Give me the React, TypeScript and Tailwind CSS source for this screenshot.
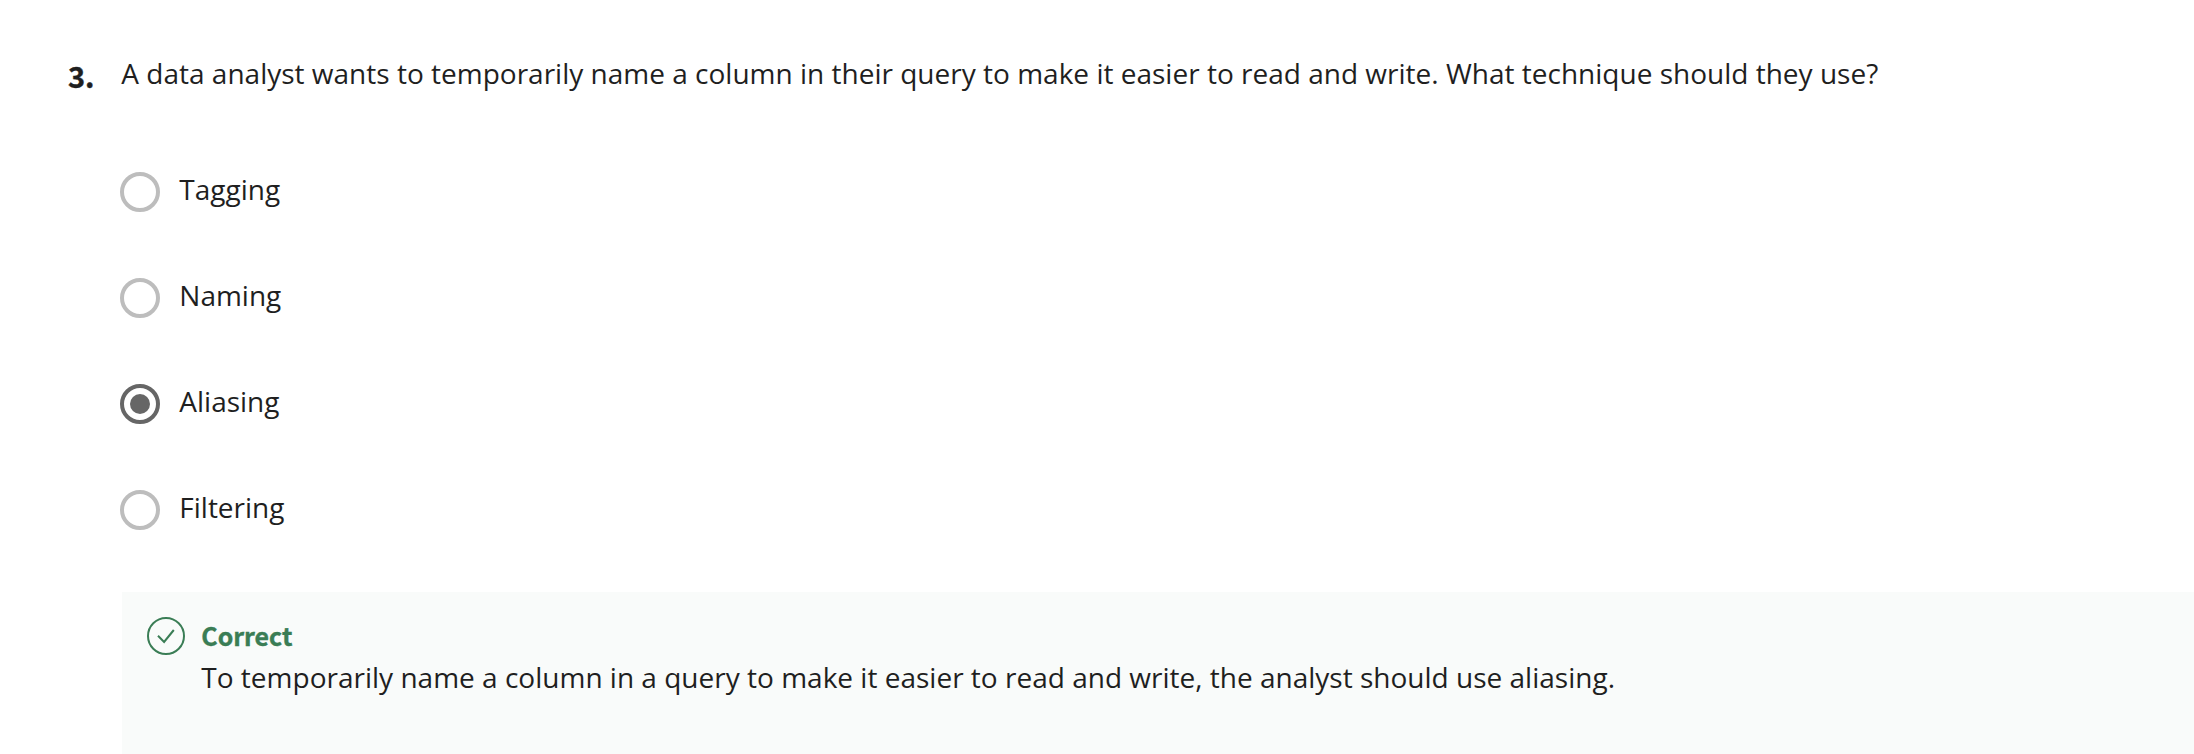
const options = ["Tagging", "Naming", "Aliasing", "Filtering"];
const selected = "Aliasing";

function Radio({ checked }: { checked: boolean }) {
  return (
    <span className={`mt-1 flex size-10 shrink-0 items-center justify-center rounded-full border-4 ${checked ? "border-[#666666]" : "border-[#bdbdbd]"}`}>
      {checked && <span className="size-5 rounded-full bg-[#666666]" />}
    </span>
  );
}

export default function App() {
  return (
    <main className="h-[754px] overflow-hidden bg-white pt-[52px] pl-[68px] font-['Open_Sans',sans-serif] text-[28px] leading-[42px] text-[#1f1f1f]">
      <div className="flex h-[42px]">
        <div className="w-[53.3px] shrink-0 pt-[2px] font-['Noto_Sans_CJK_JP',sans-serif] text-[29px] leading-[42px] font-bold [-webkit-text-stroke:0.4px_#1f1f1f]">3.</div>
        <p className="whitespace-nowrap tracking-[0.006px]">A data analyst wants to temporarily name a column in their query to make it easier to read and write. What technique should they use?</p>
      </div>
      <div className="mt-[74px] ml-[52px] flex flex-col gap-16">
        {options.map((o) => (
          <label key={o} className="flex h-[42px] gap-[19.3px]">
            <Radio checked={o === selected} />
            <span>{o}</span>
          </label>
        ))}
      </div>
      <section className="mt-16 ml-[54px] flex h-[162px] bg-[#f9fbfa] pt-[25px] pl-[25px]">
        <svg className="mr-[16.3px] size-[38px] shrink-0" viewBox="0 0 38 38" fill="none" stroke="#3a7d55" strokeWidth="2">
          <circle cx="19" cy="19" r="18" />
          <path d="M11 18.8 L17.1 25 L26.8 13" />
        </svg>
        <div>
          <h2 className="h-[39px] font-['Noto_Sans_CJK_JP',sans-serif] text-[24.9px] leading-[36px] font-bold text-[#3a7d55] [-webkit-text-stroke:0.4px_#3a7d55]">Correct</h2>
          <p className="whitespace-nowrap tracking-[0.006px]">To temporarily name a column in a query to make it easier to read and write, the analyst should use aliasing.</p>
        </div>
      </section>
    </main>
  );
}
